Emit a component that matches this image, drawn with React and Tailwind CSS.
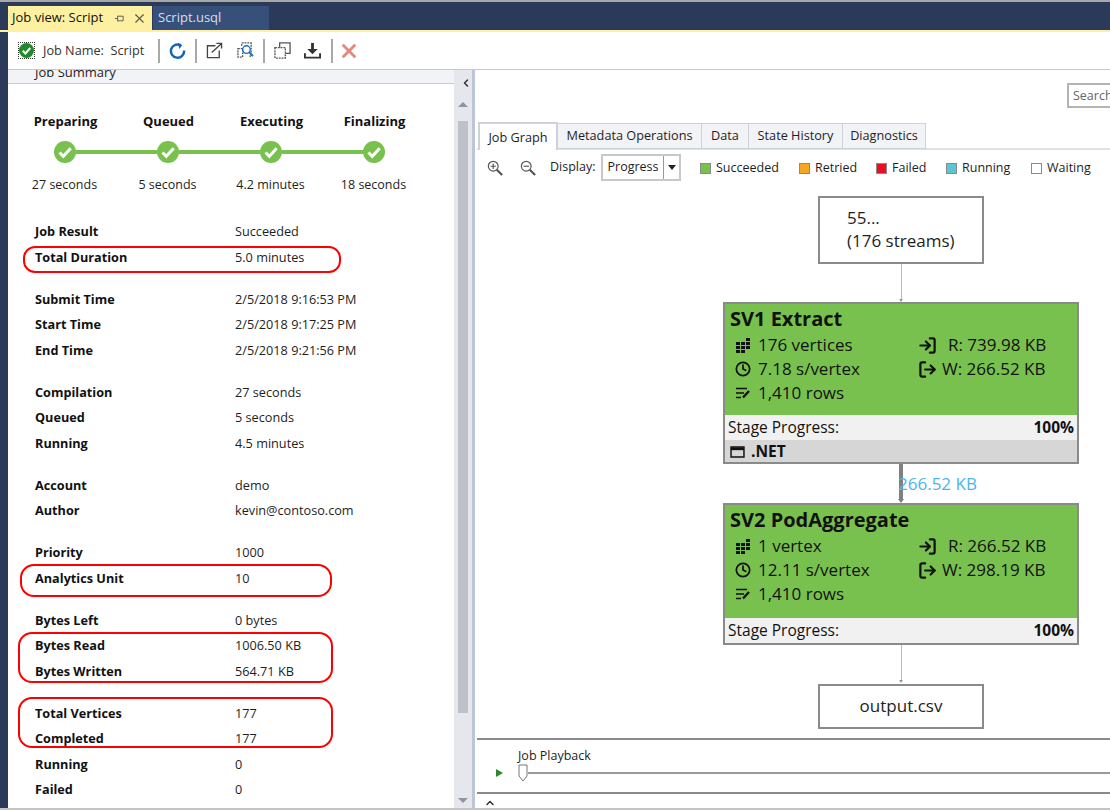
import { ChevronLeft, ChevronUp, Clock, LogIn, LogOut, X } from 'lucide-react';

const FONT = "font-['Open_Sans','Noto_Sans',sans-serif]";

const stages = [
  { name: 'Preparing', time: '27 seconds' },
  { name: 'Queued', time: '5 seconds' },
  { name: 'Executing', time: '4.2 minutes' },
  { name: 'Finalizing', time: '18 seconds' },
];

const groups = [
  [['Job Result', 'Succeeded'], ['Total Duration', '5.0 minutes']],
  [['Submit Time', '2/5/2018 9:16:53 PM'], ['Start Time', '2/5/2018 9:17:25 PM'], ['End Time', '2/5/2018 9:21:56 PM']],
  [['Compilation', '27 seconds'], ['Queued', '5 seconds'], ['Running', '4.5 minutes']],
  [['Account', 'demo'], ['Author', 'kevin@contoso.com']],
  [['Priority', '1000'], ['Analytics Unit', '10']],
  [['Bytes Left', '0 bytes'], ['Bytes Read', '1006.50 KB'], ['Bytes Written', '564.71 KB']],
  [['Total Vertices', '177'], ['Completed', '177'], ['Running', '0'], ['Failed', '0']],
];

const legend = [
  { label: 'Succeeded', swatch: 'bg-[#79c14e]', w: 'w-[99px]' },
  { label: 'Retried', swatch: 'bg-[#f5a623]', w: 'w-[77px]' },
  { label: 'Failed', swatch: 'bg-[#e81123]', w: 'w-[70px]' },
  { label: 'Running', swatch: 'bg-[#5bc5d6]', w: 'w-[85px]' },
  { label: 'Waiting', swatch: 'bg-white', w: 'w-[70px]' },
];

const tabs = [
  { label: 'Metadata Operations', w: 'w-[144px]' },
  { label: 'Data', w: 'w-[47px]' },
  { label: 'State History', w: 'w-[94px]' },
  { label: 'Diagnostics', w: 'w-[83px]' },
];

function CheckDot({ className }) {
  return (
    <svg viewBox="0 0 22 22" className={className}>
      <circle cx="11" cy="11" r="11" fill="#79c14e" />
      <path d="M5.5 11.5l3.8 3.8 7.4-8" fill="none" stroke="#fff" strokeWidth="3" />
    </svg>
  );
}

function Sep() {
  return <div className="w-[2px] h-[24px] bg-[#a9a9a9]" />;
}

function GridIcon() {
  return (
    <svg viewBox="0 0 16 16" className="w-[16px] h-[16px]" fill="#111">
      <path d="M1 5h4v3H1zM6 5h4v3H6zM11 5h4v3h-4zM1 9h4v3H1zM6 9h4v3H6zM11 9h4v3h-4zM1 13h4v3H1zM6 13h4v3H6zM11 1h4v3h-4z" />
    </svg>
  );
}

function RowsIcon() {
  return (
    <svg viewBox="0 0 16 16" className="w-[16px] h-[16px]" fill="none" stroke="#111" strokeWidth="1.6">
      <path d="M1 3.5h11M1 8h8M1 12.5h5" />
      <path d="M8 12.5l6-6.5" strokeWidth="2.4" />
    </svg>
  );
}

function StageNode({ title, stats, right, dotnet, bodyHeight }) {
  return (
    <div className="w-[356px] border-2 border-[#8a8a8a] bg-[#79c14e] text-[#111]">
      <div className={`${bodyHeight} pl-[5px] pt-[2px]`}>
        <div className="text-[20px] leading-[26px] font-bold">{title}</div>
        <div className="flex text-[17px] leading-[24px] mt-[1px]">
          <div className="w-[188px]">
            {stats.map((s, i) => (
              <div key={s} className="flex items-center gap-[7px] pl-[5px]">
                {i === 0 && <GridIcon />}
                {i === 1 && <Clock className="w-[16px] h-[16px]" strokeWidth={2.6} />}
                {i === 2 && <RowsIcon />}
                <span>{s}</span>
              </div>
            ))}
          </div>
          <div>
            <div className="flex items-center">
              <LogIn className="w-[19px] h-[19px]" strokeWidth={2.8} />
              <span className="ml-[11px]">{right[0]}</span>
            </div>
            <div className="flex items-center">
              <LogOut className="w-[19px] h-[19px]" strokeWidth={2.8} />
              <span className="ml-[5px]">{right[1]}</span>
            </div>
          </div>
        </div>
      </div>
      <div className="h-[25px] pt-[1px] bg-[#f1f1f1] flex items-center justify-between px-[3px] text-[15.5px]">
        <span>Stage Progress:</span>
        <span className="font-bold">100%</span>
      </div>
      {dotnet && (
        <div className="h-[22px] pt-[1px] bg-[#d6d6d6] flex items-center gap-[6px] px-[5px] text-[15.5px] font-bold">
          <svg viewBox="0 0 16 13" className="w-[15px] h-[12px]" fill="none" stroke="#111">
            <path d="M1 1h14v11H1z" strokeWidth="1.6" />
            <path d="M1 3h14" strokeWidth="3" />
          </svg>
          .NET
        </div>
      )}
    </div>
  );
}

function ThinLink() {
  return (
    <div className="h-[38px] flex flex-col items-center">
      <div className="w-px flex-1 bg-[#b8b8b8]" />
      <div className="w-0 h-0 border-x-[2px] border-x-transparent border-t-[3px] border-t-[#9a9a9a]" />
    </div>
  );
}

export default function App() {
  return (
    <div className={`${FONT} relative w-[1110px] h-[810px] overflow-hidden bg-white text-[#1e1e1e] flex flex-col`}>
      <div className="h-[2px] bg-[#a8a8a8]" />
      <div className="h-[30px] bg-[#2a3a58] pl-[8px] flex items-end border-b-2 border-[#fdf0a0]">
        <div className="w-[144px] h-[24px] bg-[#fdf0a0] flex items-center pl-[4px] text-[13px] text-[#111]">
          <span>Job view: Script</span>
          <svg viewBox="0 0 12 12" className="w-[11px] h-[11px] ml-[11px]" fill="none" stroke="#555">
            <path d="M1 6h3M4 3v6M4 3.5h6v5H4" />
          </svg>
          <X className="w-[15px] h-[15px] ml-[7px] text-[#555]" strokeWidth={1.7} />
        </div>
        <div className="w-[116px] h-[24px] ml-[1px] bg-[#36507a] flex items-center pl-[5px] text-[13px] text-[#d6dfee]">
          Script.usql
        </div>
      </div>

      <div className="flex-1 min-h-0 flex bg-[#2a3a58] border-b-2 border-[#c4c4c4]">
        <div className="w-[8px]" />
        <div className="flex-1 min-w-0 bg-white flex flex-col">
          {/* toolbar */}
          <div className="h-[38px] flex items-center border-b border-[#c6c8d0] text-[#333] shrink-0">
            <div className="ml-[10px] w-[17px] h-[17px] border border-dotted border-[#333] flex items-center justify-center">
              <svg viewBox="0 0 16 16" className="w-[15px] h-[15px]">
                <circle cx="8" cy="8" r="8" fill="#1e8a2a" />
                <path d="M4 8.3l2.8 2.8 5.2-5.8" fill="none" stroke="#fff" strokeWidth="2.2" />
              </svg>
            </div>
            <span className="ml-[8px] w-[115px] text-[12.7px] whitespace-pre">Job Name:  Script</span>
            <Sep />
            <svg viewBox="0 0 18 18" className="w-[17px] h-[17px] ml-[9px]" fill="none" stroke="#1464b4" strokeWidth="2.6">
              <path d="M12.5 3.5A7 7 0 1 0 16 9" />
              <path d="M9.5 1l4.5 2.5-3 4z" fill="#1464b4" stroke="none" />
            </svg>
            <div className="ml-[9px]"><Sep /></div>
            <svg viewBox="0 0 18 18" className="w-[17px] h-[17px] ml-[9px]" fill="none" stroke="#444" strokeWidth="1.4">
              <path d="M10 4H1.5v12.5H14V9" />
              <path d="M6 11L16 2M11 1.5h5.5V7" />
            </svg>
            <svg viewBox="0 0 18 18" className="w-[17px] h-[17px] ml-[14px]" fill="none" strokeWidth="1.4">
              <path d="M5 4V1h10v14h-2M1 7h5v9H1z" stroke="#555" strokeDasharray="2 1" />
              <circle cx="10" cy="8" r="4" stroke="#1a6cb8" />
              <path d="M13 11l4 4" stroke="#1a6cb8" strokeWidth="2" />
            </svg>
            <div className="ml-[9px]"><Sep /></div>
            <svg viewBox="0 0 18 18" className="w-[17px] h-[17px] ml-[9px]" fill="none" stroke="#555" strokeWidth="1.4">
              <path d="M6 1h11v11H6z" />
              <path d="M1 6h11v11H1z" fill="#fff" strokeDasharray="2 1" />
            </svg>
            <svg viewBox="0 0 18 18" className="w-[17px] h-[17px] ml-[13px]" fill="none" stroke="#333" strokeWidth="2">
              <path d="M9 1v9" strokeWidth="3" />
              <path d="M3.5 7.5h11L9 13z" fill="#333" stroke="none" />
              <path d="M1 12v4.5h16V12" />
            </svg>
            <div className="ml-[10px]"><Sep /></div>
            <X className="w-[22px] h-[22px] ml-[5px] text-[#e0897c]" strokeWidth={3} />
          </div>

          <div className="flex-1 min-h-0 flex">
            {/* left panel */}
            <div className="w-[446px] shrink-0 overflow-hidden">
              <div className="h-[14px] bg-[#f2f3f6] border-b border-[#c6cbdc] overflow-hidden">
                <div className="pl-[27px] mt-[-7px] text-[13px] leading-[18px]">Job Summary</div>
              </div>
              <div className="grid grid-cols-[repeat(4,103px)] ml-[6px] mt-[27px] text-center">
                {stages.map(s => (
                  <div key={s.name} className="text-[13px] leading-[20px] font-bold text-[#111]">{s.name}</div>
                ))}
              </div>
              <div className="flex items-center ml-[46px] mt-[10px]">
                {stages.map((s, i) => (
                  <div key={s.name} className="flex items-center">
                    <CheckDot className="w-[22px] h-[22px]" />
                    {i < 3 && <div className="w-[81px] h-[4px] bg-[#79c14e]" />}
                  </div>
                ))}
              </div>
              <div className="grid grid-cols-[repeat(4,103px)] ml-[5px] mt-[12px] text-center">
                {stages.map(s => (
                  <div key={s.name} className="text-[12.5px] leading-[20px]">{s.time}</div>
                ))}
              </div>
              <div className="mt-[24px]">
                {groups.map((g, i) => (
                  <div key={i} className="mb-[16.5px]">
                    {g.map(([k, v]) => (
                      <div key={k} className="flex h-[25.5px] items-center pl-[27px] text-[12.7px]">
                        <span className="w-[200px] font-bold text-[#111]">{k}</span>
                        <span>{v}</span>
                      </div>
                    ))}
                  </div>
                ))}
              </div>
            </div>

            {/* scrollbar */}
            <div className="w-[18px] shrink-0 flex flex-col bg-[#e6e7ec]">
              <div className="h-[26px] pl-[6px] flex items-center text-[#333]">
                <ChevronLeft className="w-[12px] h-[12px]" strokeWidth={3} />
              </div>
              <div className="h-[25px] flex justify-center pt-[6px]">
                <div className="w-0 h-0 border-x-[5px] border-x-transparent border-b-[5px] border-b-[#8e94a4]" />
              </div>
              <div className="w-[10px] h-[592px] mx-auto bg-[#bfc1c8]" />
              <div className="mt-auto h-[10px] flex justify-center">
                <div className="w-0 h-0 border-x-[5px] border-x-transparent border-t-[5px] border-t-[#8e94a4]" />
              </div>
            </div>
            <div className="w-[5px] shrink-0 bg-[#bcc6d8] border-r-2 border-white" />

            {/* right panel */}
            <div className="flex-1 min-w-0 flex flex-col">
              <div className="h-[52px] shrink-0 flex justify-end items-start pt-[13px]">
                <div className="w-[43px] h-[25px] border-y-2 border-l-2 border-[#b4b4b4] pl-[4px] text-[12.5px] leading-[21px] text-[#666] overflow-hidden">
                  Search
                </div>
              </div>
              <div className="h-[28px] shrink-0 flex items-end border-b-2 border-[#dfe1e8] pl-[1px] text-[12.7px]">
                <div className="w-[80px] h-[28px] mb-[-2px] pt-[1px] bg-white border-x-2 border-t-2 border-[#cdd1dc] flex items-center justify-center">
                  Job Graph
                </div>
                {tabs.map(t => (
                  <div key={t.label} className={`${t.w} h-[26px] mb-[-1px] bg-[#f2f3f6] border-y border-r border-[#cdd1dc] flex items-center justify-center`}>
                    {t.label}
                  </div>
                ))}
              </div>
              <div className="h-[35px] shrink-0 flex items-center text-[12.5px]">
                <svg viewBox="0 0 18 18" className="w-[16px] h-[16px] ml-[10px]" fill="none" stroke="#555" strokeWidth="1.3">
                  <circle cx="7" cy="7" r="5.5" />
                  <path d="M4 7h6M7 4v6" />
                  <path d="M11 11l6 6" strokeWidth="2.4" />
                </svg>
                <svg viewBox="0 0 18 18" className="w-[16px] h-[16px] ml-[17px]" fill="none" stroke="#555" strokeWidth="1.3">
                  <circle cx="7" cy="7" r="5.5" />
                  <path d="M4 7h6" />
                  <path d="M11 11l6 6" strokeWidth="2.4" />
                </svg>
                <span className="ml-[14px] w-[51px]">Display:</span>
                <div className="w-[80px] h-[27px] border-2 border-[#c8c8c8] flex items-center">
                  <span className="w-[60px] text-center">Progress</span>
                  <div className="h-full flex-1 border-l border-[#999] flex items-center justify-center">
                    <div className="w-0 h-0 border-x-[4px] border-x-transparent border-t-[5px] border-t-[#222]" />
                  </div>
                </div>
                <div className="ml-[19px] pt-[2px] flex">
                  {legend.map(l => (
                    <div key={l.label} className={`${l.w} flex items-center gap-[5px]`}>
                      <div className={`w-[11px] h-[11px] border border-[#8a8a8a] ${l.swatch}`} />
                      <span>{l.label}</span>
                    </div>
                  ))}
                </div>
              </div>

              {/* graph */}
              <div className="relative ml-[246px] w-[356px] mt-[11px] flex flex-col items-center">
                <div className="w-[166px] h-[68px] border-2 border-[#8a8a8a] pl-[27px] pt-[8px] text-[17px] leading-[23px]">
                  <div>55...</div>
                  <div>(176 streams)</div>
                </div>
                <ThinLink />
                <StageNode
                  title="SV1 Extract"
                  stats={['176 vertices', '7.18 s/vertex', '1,410 rows']}
                  right={['R: 739.98 KB', 'W: 266.52 KB']}
                  bodyHeight="h-[111px]"
                  dotnet
                />
                <div className="h-[39px] flex flex-col items-center">
                  <div className="relative w-[4px] flex-1 bg-[#808080]">
                    <span className="absolute left-[-1px] top-[9px] text-[17px] leading-[22px] text-[#4db5e8] whitespace-nowrap">266.52 KB</span>
                  </div>
                  <div className="w-0 h-0 border-x-[3px] border-x-transparent border-t-[4px] border-t-[#808080]" />
                </div>
                <StageNode
                  title="SV2 PodAggregate"
                  stats={['1 vertex', '12.11 s/vertex', '1,410 rows']}
                  right={['R: 266.52 KB', 'W: 298.19 KB']}
                  bodyHeight="h-[113px]"
                />
                <ThinLink />
                <div className="w-[166px] h-[45px] mt-[1px] pb-[2px] border-2 border-[#8a8a8a] flex items-center justify-center text-[17px]">
                  output.csv
                </div>
              </div>

              <div className="mt-auto shrink-0">
                <div className="h-[54px] border-t-2 border-[#8a8a8a]">
                  <div className="pl-[41px] pt-[6px] text-[12.5px] leading-[20px]">Job Playback</div>
                  <div className="flex items-center pl-[19px] mt-[-2px]">
                    <div className="w-0 h-0 border-y-[4px] border-y-transparent border-l-[7px] border-l-[#2a8a2a]" />
                    <svg viewBox="0 0 10 18" className="w-[10px] h-[18px] ml-[15px]" fill="#fff" stroke="#777">
                      <path d="M1 1h8v11l-4 5-4-5z" />
                    </svg>
                    <div className="flex-1 h-[2px] bg-[#9a9a9a]" />
                  </div>
                </div>
                <div className="h-[16px] border-t-2 border-[#8a8a8a] pl-[7px] text-[#333]">
                  <ChevronUp className="w-[12px] h-[12px] mt-[3px]" strokeWidth={3} />
                </div>
              </div>
            </div>
          </div>
        </div>
      </div>

      {/* red annotations */}
      <div className="absolute left-[23px] top-[246px] w-[318px] h-[27px] border-2 border-[#f00] rounded-[12px]" />
      <div className="absolute left-[20px] top-[564px] w-[312px] h-[33px] border-2 border-[#f00] rounded-[14px]" />
      <div className="absolute left-[18px] top-[632px] w-[315px] h-[51px] border-2 border-[#f00] rounded-[14px]" />
      <div className="absolute left-[18px] top-[697px] w-[315px] h-[51px] border-2 border-[#f00] rounded-[14px]" />
    </div>
  );
}
